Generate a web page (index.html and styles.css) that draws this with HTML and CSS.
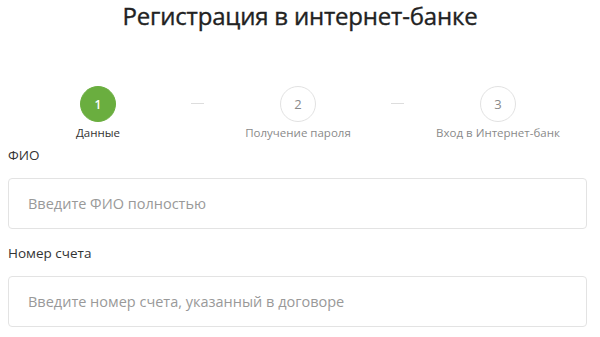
FILE: index.html
```html
<!DOCTYPE html>
<html lang="ru">
<head>
    <meta charset="UTF-8"/>
    <meta name="viewport" content="width=device-width, initial-scale=1.0"/>
    <title>Регистрация в интернет-банке</title>
    <link rel="stylesheet" href="styles.css">
</head>
<body>
<div class="page">
    <!-- Заголовок -->
    <h1 class="title">Регистрация в интернет-банке</h1>

    <!-- Шаги регистрации -->
    <ol class="steps">
        <li class="step step-active">
            <span class="step-num">1</span>
            <span class="step-label">Данные</span>
        </li>
        <li class="step">
            <span class="step-num">2</span>
            <span class="step-label">Получение пароля</span>
        </li>
        <li class="step">
            <span class="step-num">3</span>
            <span class="step-label">Вход в Интернет-банк</span>
        </li>
    </ol>

    <!-- Форма -->
    <form class="reg-form">
        <div class="field">
            <label class="field-label" for="fio">ФИО</label>
            <input class="field-input" id="fio" type="text" placeholder="Введите ФИО полностью"/>
        </div>
        <div class="field">
            <label class="field-label" for="account">Номер счета</label>
            <input class="field-input" id="account" type="text" placeholder="Введите номер счета, указанный в договоре"/>
        </div>
    </form>
</div>
</body>
</html>
```

FILE: styles.css
```css
/* Базовые стили */
* {
    margin: 0;
    padding: 0;
    box-sizing: border-box;
}

body {
    font-family: "Open Sans", "Noto Sans", sans-serif;
    background-color: #ffffff;
    color: #333333;
    overflow: hidden;
}

.page {
    width: 600px;
}

/* Заголовок */
.title {
    font-size: 24px;
    font-weight: 400;
    line-height: 32px;
    letter-spacing: -0.2px;
    text-align: center;
    color: #222222;
    -webkit-text-stroke: 0.35px #222222;
}

/* Шаги */
.steps {
    list-style: none;
    display: flex;
    margin-top: 54px;
    margin-left: -2px;
}

.step {
    position: relative;
    width: 200px;
    display: flex;
    flex-direction: column;
    align-items: center;
}

/* черточка между шагами */
.step + .step::before {
    content: "";
    position: absolute;
    left: -7px;
    top: 17px;
    width: 13px;
    height: 1px;
    background-color: #dddddd;
}

.step-num {
    width: 36px;
    height: 36px;
    border-radius: 50%;
    border: 1px solid #e2e2e2;
    display: flex;
    align-items: center;
    justify-content: center;
    font-size: 13px;
    color: #8a8a8a;
    background-color: #ffffff;
}

.step-label {
    margin-top: 3px;
    font-size: 11.5px;
    line-height: 16px;
    color: #8a8a8a;
}

.step-active .step-num {
    background-color: #6aae3f;
    border-color: #6aae3f;
    color: #ffffff;
    font-weight: 600;
    font-size: 12px;
}

.step-active .step-label {
    color: #333333;
}

/* Форма */
.reg-form {
    padding: 4px 8px 0 8px;
}

.field {
    margin-bottom: 14px;
}

.field-label {
    display: block;
    font-size: 13.5px;
    line-height: 20px;
    margin-bottom: 13px;
    color: #333333;
}

.field-input {
    display: block;
    width: 579px;
    height: 51px;
    padding: 0 19px;
    border: 1px solid #e3e3e3;
    border-radius: 4px;
    font-family: "Open Sans", "Noto Sans", sans-serif;
    font-size: 14.5px;
    color: #333333;
    outline: none;
}

.field-input::placeholder {
    color: #999999;
}
```
